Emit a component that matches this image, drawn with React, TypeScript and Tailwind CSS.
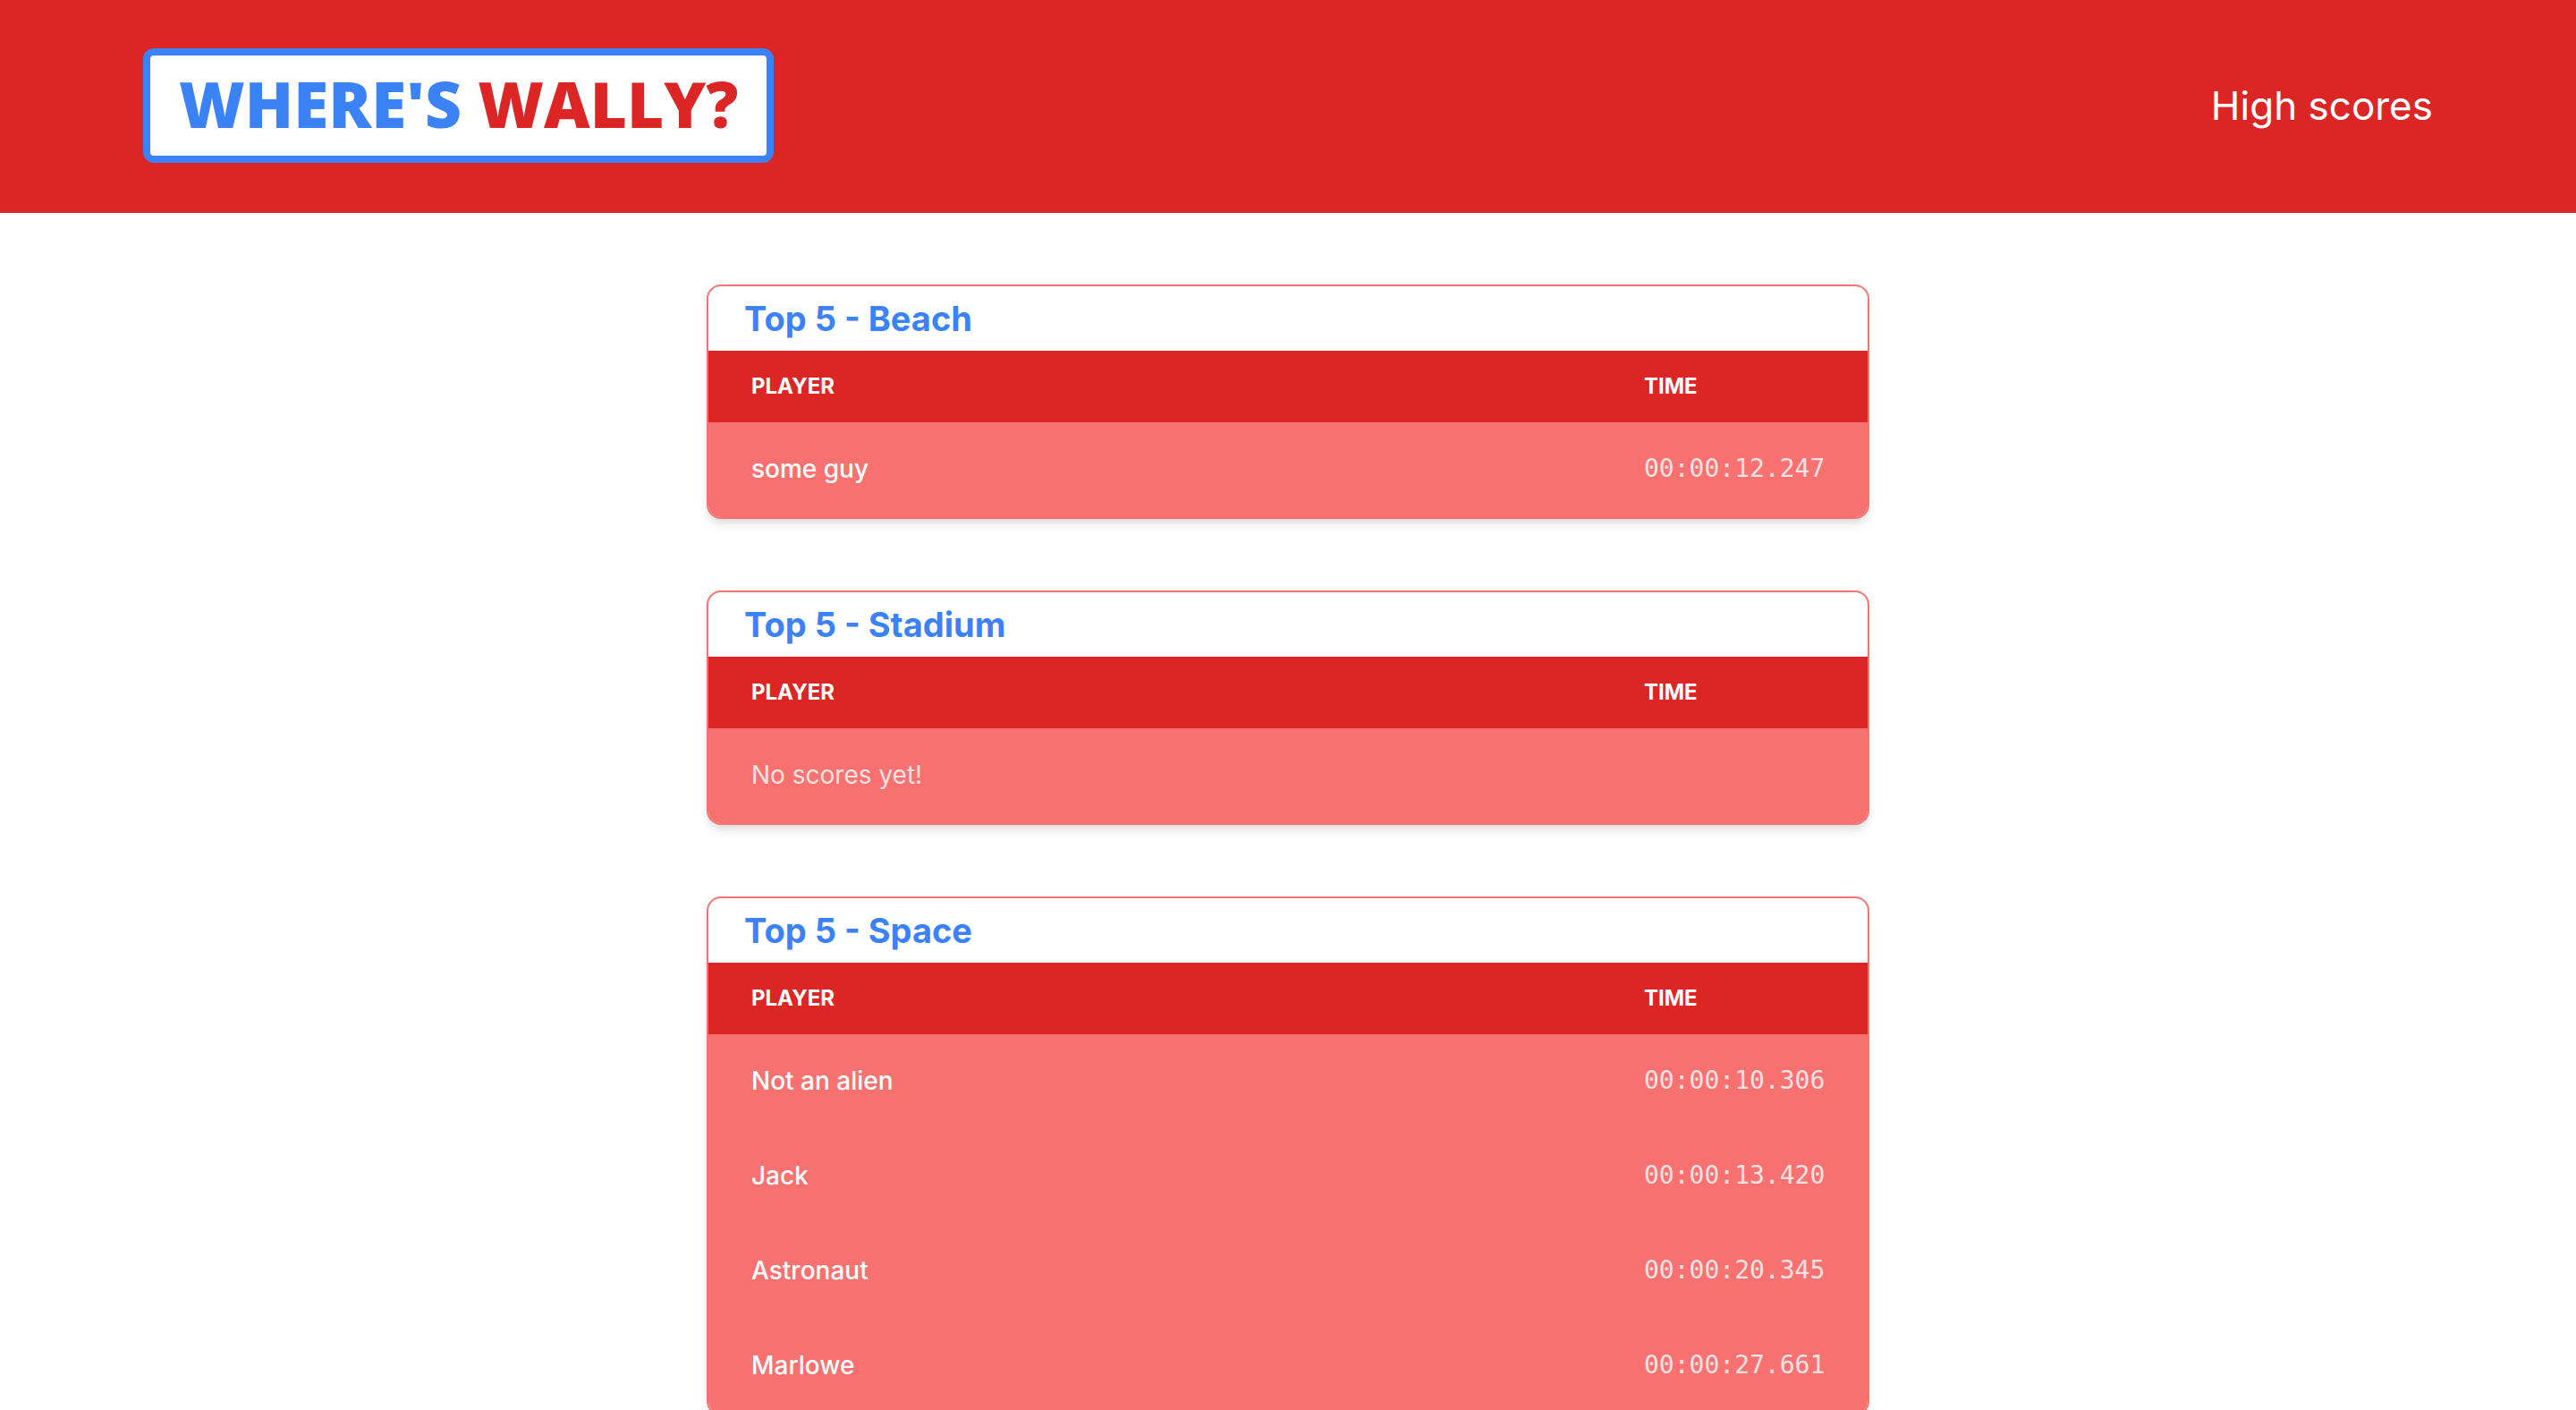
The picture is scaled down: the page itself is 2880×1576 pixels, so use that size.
interface Score {
  player: string
  time: string
}

interface ScoreTableProps {
  level: string
  scores: Score[]
}

const levels: ScoreTableProps[] = [
  {
    level: "Beach",
    scores: [{ player: "some guy", time: "00:00:12.247" }],
  },
  {
    level: "Stadium",
    scores: [],
  },
  {
    level: "Space",
    scores: [
      { player: "Not an alien", time: "00:00:10.306" },
      { player: "Jack", time: "00:00:13.420" },
      { player: "Astronaut", time: "00:00:20.345" },
      { player: "Marlowe", time: "00:00:27.661" },
    ],
  },
]

const Header = () => {
  return (
    <header className="flex items-center justify-between bg-[#dc2626] px-40 pt-[54px] pb-14">
      <a href="#" className="rounded-xl border-8 border-[#3b82f6] bg-white px-8 pt-[18px] pb-[22px]">
        <h1 className="font-['Open_Sans',sans-serif] text-[71px] leading-[72px] font-extrabold whitespace-nowrap text-[#3b82f6] uppercase">
          Where's <span className="text-[#dc2626]">Wally?</span>
        </h1>
      </a>
      <nav>
        <a href="#scores" className="text-[44px] leading-[56px] text-white">
          High scores
        </a>
      </nav>
    </header>
  )
}

const ScoreTable = ({ level, scores }: ScoreTableProps) => {
  return (
    <section className="overflow-hidden rounded-2xl border-2 border-[#f87171] bg-white shadow-[0_8px_12px_-2px_rgba(0,0,0,0.1),0_4px_8px_-4px_rgba(0,0,0,0.1)]">
      <h2 className="px-10 py-4 text-[38px] leading-10 font-bold text-[#3b82f6]">Top 5 - {level}</h2>
      <table className="w-full table-fixed text-left text-[28px] leading-10">
        <thead className="bg-[#dc2626] text-[24px] text-white uppercase">
          <tr>
            <th scope="col" className="px-12 py-5 font-bold">Player</th>
            <th scope="col" className="w-[298px] px-12 py-5 font-bold">Time</th>
          </tr>
        </thead>
        <tbody className="bg-[#f87171] text-[#fee2e2]">
          {scores.map((s) => (
            <tr key={s.player}>
              <th scope="row" className="px-12 pt-8 pb-[34px] font-medium text-white">{s.player}</th>
              <td className="px-12 pt-8 pb-[34px] font-['DejaVu_Sans_Mono',monospace] whitespace-nowrap">{s.time}</td>
            </tr>
          ))}
          {scores.length === 0 && (
            <tr>
              <td colSpan={2} className="px-12 pt-8 pb-[34px]">No scores yet!</td>
            </tr>
          )}
        </tbody>
      </table>
    </section>
  )
}

export default function App() {
  return (
    <div className="min-h-screen bg-white font-['Inter',sans-serif]">
      <Header />
      <main id="scores" className="mx-auto flex max-w-[1300px] flex-col gap-20 py-20">
        {levels.map((l) => (
          <ScoreTable key={l.level} level={l.level} scores={l.scores} />
        ))}
      </main>
    </div>
  )
}
